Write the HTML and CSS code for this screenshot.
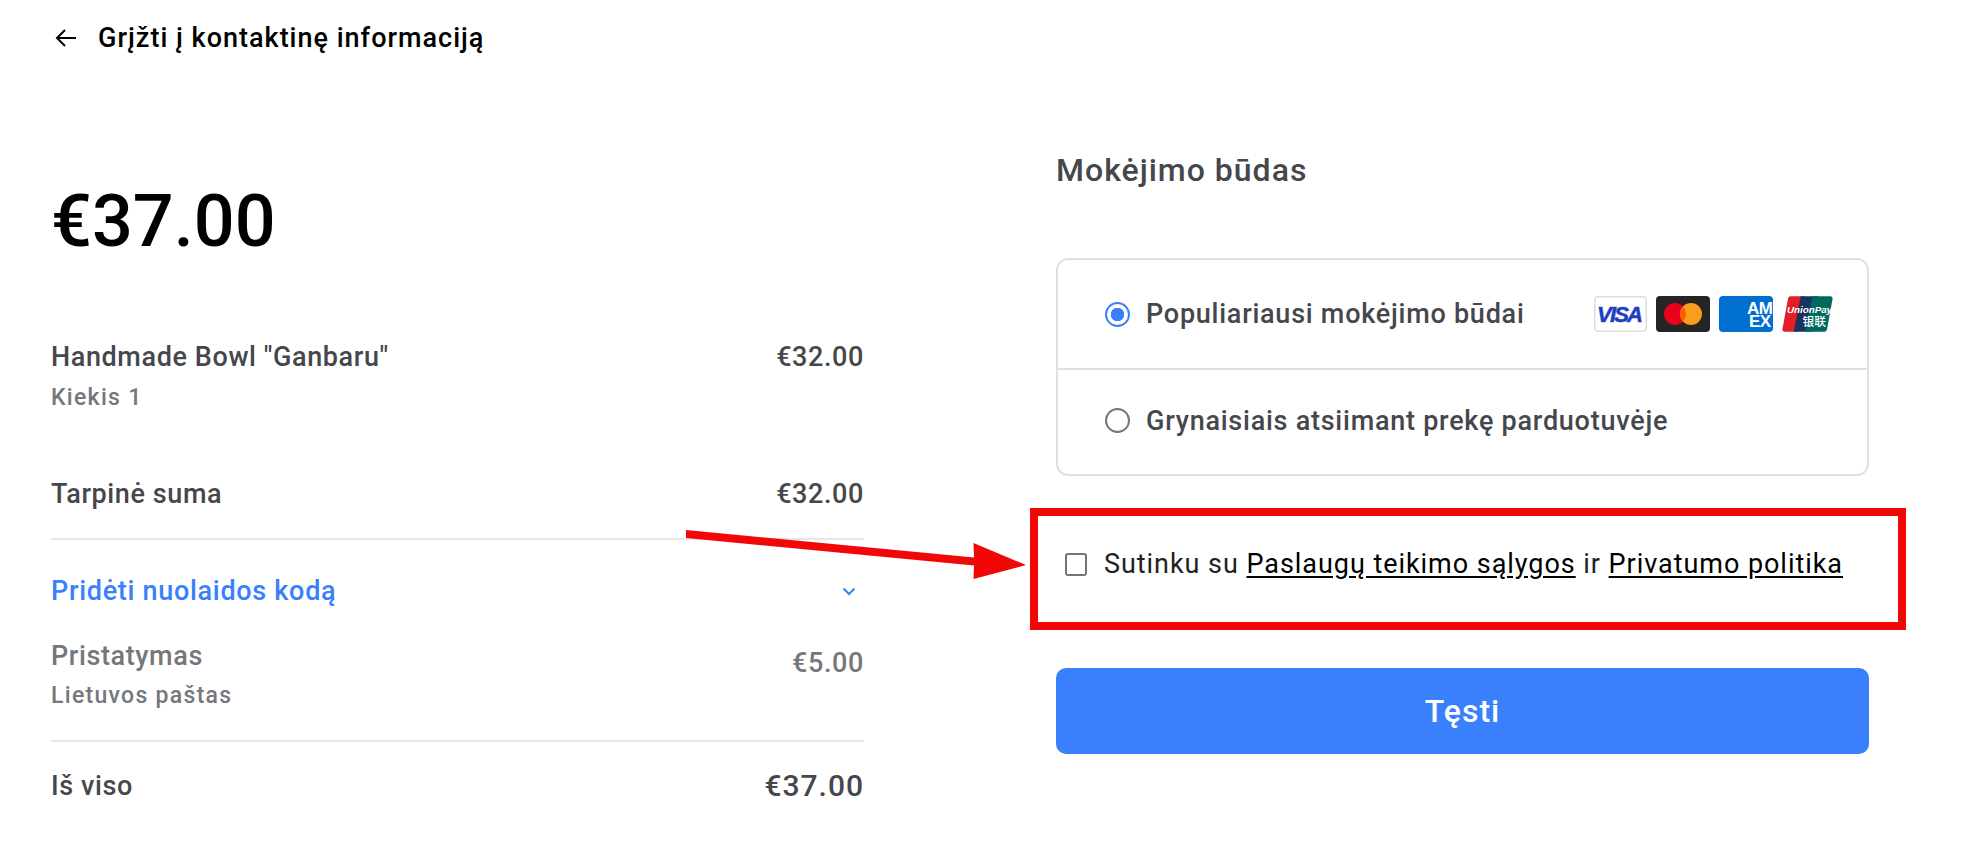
FILE: index.html
```html
<!DOCTYPE html>
<html lang="lt">
<head>
  <meta charset="UTF-8" />
  <title>Mokėjimas</title>
  <link rel="stylesheet" href="styles.css">
</head>
<body>
  <!-- Back link -->
  <header class="top-bar">
    <a class="back-link" href="#">
      <svg class="back-icon" width="24" height="24" viewBox="0 0 24 24" fill="none" stroke="#000" stroke-width="2"><path d="M22 12H3M11 4l-8 8 8 8"/></svg>
      <span>Grįžti į kontaktinę informaciją</span>
    </a>
  </header>

  <main class="checkout">
    <!-- Order summary -->
    <section class="summary">
      <h1 class="total-price">€37.00</h1>

      <div class="line line-item">
        <div>
          <div class="line-name">Handmade Bowl "Ganbaru"</div>
          <div class="line-sub">Kiekis 1</div>
        </div>
        <div class="line-value">€32.00</div>
      </div>

      <div class="line line-subtotal">
        <div class="line-name">Tarpinė suma</div>
        <div class="line-value">€32.00</div>
      </div>

      <div class="discount">
        <a class="discount-link" href="#">Pridėti nuolaidos kodą</a>
        <svg class="chevron" width="14" height="9" viewBox="0 0 14 9" fill="none" stroke="#3a7ffb" stroke-width="2"><path d="M1.5 1.5 7 7l5.500-5.500"/></svg>
      </div>

      <div class="line line-shipping">
        <div>
          <div class="line-name">Pristatymas</div>
          <div class="line-sub">Lietuvos paštas</div>
        </div>
        <div class="line-value">€5.00</div>
      </div>

      <div class="line line-total">
        <div class="line-name">Iš viso</div>
        <div class="line-value">€37.00</div>
      </div>
    </section>

    <!-- Payment -->
    <section class="payment">
      <h2 class="payment-title">Mokėjimo būdas</h2>

      <div class="methods">
        <div class="method method-first">
          <span class="radio radio-on"></span>
          <span class="method-name">Populiariausi mokėjimo būdai</span>
          <div class="cards">
            <svg class="card" width="53" height="36" viewBox="0 0 53 36">
              <rect x=".75" y=".75" width="51.500" height="34.500" rx="3.500" fill="#fff" stroke="#dcdcdc" stroke-width="1.500"/>
              <text class="visa-text" x="26" y="26" text-anchor="middle" textLength="46">VISA</text>
            </svg>
            <svg class="card" width="54" height="36" viewBox="0 0 54 36">
              <rect width="54" height="36" rx="4" fill="#252525"/>
              <circle cx="19" cy="18" r="11" fill="#eb001b"/>
              <circle cx="35" cy="18" r="11" fill="#f79e1b"/>
              <path d="M27 10.400a11 11 0 0 1 0 15.200a11 11 0 0 1 0-15.200z" fill="#ff5f00"/>
            </svg>
            <svg class="card" width="54" height="36" viewBox="0 0 54 36">
              <rect width="54" height="36" rx="4" fill="#016fd0"/>
              <text class="amex-text"><tspan x="28" y="18">AM</tspan><tspan x="30" y="31">EX</tspan></text>
            </svg>
            <svg class="card" width="51" height="36" viewBox="0 0 52 36">
              <path d="M7 0h16l-7 36H3q-3 0-2.500-3L6 3q.300-3 3-3z" fill="#e21e26"/>
              <path d="M19 0h18l-7 36H12z" fill="#17335f"/>
              <path d="M31 0h18q3 0 2.500 3L46 33q-.500 3-3 3H24z" fill="#00695f"/>
              <text><tspan class="up-text" x="5" y="17">UnionPay</tspan><tspan class="up-cjk" x="21" y="30">银联</tspan></text>
            </svg>
          </div>
        </div>
        <div class="method method-second">
          <span class="radio"></span>
          <span class="method-name">Grynaisiais atsiimant prekę parduotuvėje</span>
        </div>
      </div>

      <label class="consent">
        <span class="checkbox"></span>
        <span>Sutinku su <a href="#">Paslaugų teikimo sąlygos</a> ir <a href="#">Privatumo politika</a></span>
      </label>

      <button class="continue">Tęsti</button>
    </section>
  </main>

  <!-- Red annotation arrow -->
  <svg class="note-arrow" width="1978" height="868" viewBox="0 0 1978 868">
    <polygon points="686,530 974,557.500 973.500,543 1026,565 973.500,579 974,565.500 686,538" fill="#f20707"/>
  </svg>
</body>
</html>
```

FILE: styles.css
```css
* {
  margin: 0;
  padding: 0;
  box-sizing: border-box;
}

body {
  position: relative;
  height: 868px;
  overflow: hidden;
  background: #fff;
  color: #45474d;
  font-family: Roboto, "Noto Sans", sans-serif;
  font-size: 27px;
  font-weight: 500;
  letter-spacing: 0.6px;
}

a {
  color: inherit;
}

/* Back link */
.top-bar {
  height: 76px;
  padding-left: 54px;
  display: flex;
  align-items: center;
}

.back-link {
  display: flex;
  align-items: center;
  gap: 20px;
  color: #000;
  letter-spacing: 1px;
  text-decoration: none;
}

.back-icon {
  display: block;
}

/* Two columns */
.checkout {
  display: grid;
  grid-template-columns: 813px 813px;
  column-gap: 192px;
  padding-left: 51px;
}

/* Left column */
.summary {
  padding-top: 106px;
}

.total-price {
  height: 80px;
  line-height: 80px;
  font-size: 72px;
  font-weight: 500;
  letter-spacing: 0;
  color: #000;
}

.line {
  display: flex;
  justify-content: space-between;
  line-height: 32px;
}

.line-sub {
  font-size: 23px;
  line-height: 28px;
  letter-spacing: 1.3px;
  margin-top: 11px;
  color: #74777c;
}

.line-item {
  margin-top: 79px;
}

.line-subtotal {
  margin-top: 66px;
  padding-bottom: 28px;
  border-bottom: 2px solid #e6e6e6;
}

.discount {
  display: flex;
  justify-content: space-between;
  align-items: center;
  margin-top: 35px;
  padding-right: 8px;
  line-height: 32px;
}

.discount-link {
  color: #3a7ffb;
  letter-spacing: 0.7px;
  text-decoration: none;
}

.chevron {
  display: block;
}

.line-shipping {
  margin-top: 33px;
  padding-bottom: 30px;
  border-bottom: 2px solid #e6e6e6;
  color: #74777c;
}

.line-shipping .line-value {
  margin-top: 7px;
}

.line-shipping .line-sub {
  margin-top: 10px;
}

.line-total {
  margin-top: 28px;
}

.line-total .line-value {
  font-size: 30px;
  letter-spacing: 1px;
}

/* Right column */
.payment {
  padding-top: 76px;
}

.payment-title {
  height: 36px;
  line-height: 36px;
  font-size: 32px;
  font-weight: 500;
  letter-spacing: 1px;
}

.methods {
  margin-top: 70px;
  border: 2px solid #e0e0e0;
  border-radius: 12px;
}

.method {
  display: flex;
  align-items: center;
  height: 110px;
  padding-left: 47px;
  padding-right: 34px;
  letter-spacing: 0.75px;
}

.method-first {
  border-bottom: 2px solid #e0e0e0;
}

.method-second {
  height: 104px;
  padding-bottom: 3px;
}

.method-name {
  margin-left: 16px;
}

.radio {
  width: 25px;
  height: 25px;
  flex: none;
  border: 2.5px solid #757575;
  border-radius: 50%;
}

.radio-on {
  border-color: #3a7ffb;
  background: radial-gradient(circle, #3a7ffb 0 6.500px, #fff 7px);
}

.cards {
  display: flex;
  gap: 9px;
  margin-left: auto;
}

.card {
  display: block;
}

.visa-text {
  font-family: "Liberation Sans", sans-serif;
  font-size: 22px;
  font-weight: 700;
  font-style: italic;
  letter-spacing: 0;
  fill: #1a3fc4;
  stroke: #1a3fc4;
  stroke-width: 0.5px;
}

.amex-text {
  font-family: "Liberation Sans", sans-serif;
  font-size: 17px;
  font-weight: 700;
  letter-spacing: -0.5px;
  fill: #fff;
}

.up-text {
  font-family: "Liberation Sans", sans-serif;
  font-size: 10px;
  font-weight: 700;
  font-style: italic;
  letter-spacing: 0;
  fill: #fff;
}

.up-cjk {
  font-family: "Noto Sans CJK SC", sans-serif;
  font-size: 12px;
  font-weight: 500;
  letter-spacing: 0;
  fill: #fff;
}

/* Terms row, boxed in red as in the annotated shot */
.consent {
  display: flex;
  align-items: center;
  height: 122px;
  margin: 32px -37px 0 -26px;
  padding-left: 27px;
  padding-bottom: 10px;
  border: 8px solid #f20707;
  color: #222;
  font-weight: 400;
  letter-spacing: 0.95px;
}

.consent a {
  color: #000;
  text-underline-offset: 3px;
}

.checkbox {
  width: 22px;
  height: 23px;
  flex: none;
  margin-right: 17px;
  border: 2.5px solid #757575;
  border-radius: 3px;
}

.continue {
  display: block;
  width: 100%;
  height: 86px;
  margin-top: 38px;
  border: none;
  border-radius: 10px;
  background: #3a7ffb;
  color: #fff;
  font-family: inherit;
  font-size: 32px;
  font-weight: 500;
  letter-spacing: 1px;
}

/* Annotation overlay */
.note-arrow {
  position: absolute;
  top: 0;
  left: 0;
  pointer-events: none;
}
```
